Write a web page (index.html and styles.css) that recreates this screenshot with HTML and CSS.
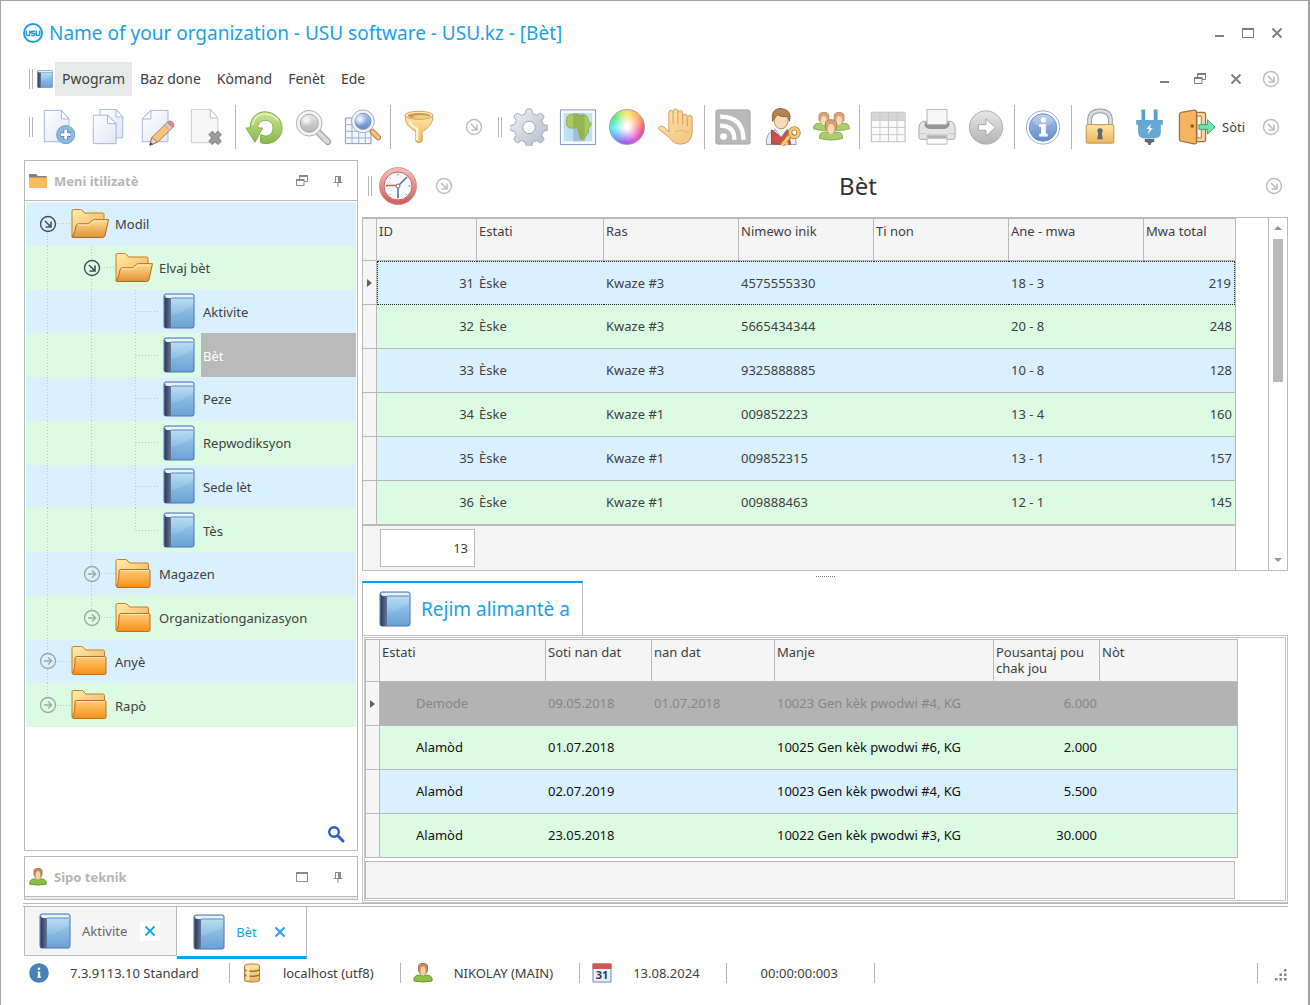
FILE: index.html
```html
<!DOCTYPE html>
<html lang="ht">

<head>
    <meta charset="utf-8" />
    <meta name="viewport" content="width=device-width, initial-scale=1.0" />

    <title>USU software - Bèt</title>

    <link rel="stylesheet" href="styles.css">
</head>

<body>
    <!-- all the icons, used below with <use> -->
    <svg class="sprite" aria-hidden="true">
        <defs>
            <linearGradient id="g-paper" x1="0" y1="0" x2="1" y2="1">
                <stop offset="0" stop-color="#ffffff" />
                <stop offset="1" stop-color="#dfe6f5" />
            </linearGradient>
            <linearGradient id="g-gray" x1="0" y1="0" x2="0" y2="1">
                <stop offset="0" stop-color="#e6e6e6" />
                <stop offset="1" stop-color="#b4b4b4" />
            </linearGradient>
            <linearGradient id="g-steel" x1="0" y1="0" x2="1" y2="1">
                <stop offset="0" stop-color="#eff2f6" />
                <stop offset="1" stop-color="#b3bac8" />
            </linearGradient>
            <linearGradient id="g-blue" x1="0" y1="0" x2="0" y2="1">
                <stop offset="0" stop-color="#a9c4ea" />
                <stop offset="1" stop-color="#6389cb" />
            </linearGradient>
            <linearGradient id="g-sky" x1="0" y1="0" x2="0" y2="1">
                <stop offset="0" stop-color="#c2e6f6" />
                <stop offset="1" stop-color="#6ba3d6" />
            </linearGradient>
            <linearGradient id="g-spine" x1="0" y1="0" x2="1" y2="0">
                <stop offset="0" stop-color="#2c3656" />
                <stop offset="1" stop-color="#64779c" />
            </linearGradient>
            <linearGradient id="g-green" x1="0" y1="0" x2="0" y2="1">
                <stop offset="0" stop-color="#cde394" />
                <stop offset="1" stop-color="#86b94c" />
            </linearGradient>
            <linearGradient id="g-gold" x1="0" y1="0" x2="0" y2="1">
                <stop offset="0" stop-color="#ffe6a6" />
                <stop offset="1" stop-color="#ecb65c" />
            </linearGradient>
            <linearGradient id="g-back" x1="0" y1="0" x2="1" y2="1">
                <stop offset="0" stop-color="#fff0a8" />
                <stop offset="1" stop-color="#f0a95a" />
            </linearGradient>
            <linearGradient id="g-orange" x1="0" y1="0" x2="0" y2="1">
                <stop offset="0" stop-color="#ffcd7c" />
                <stop offset="1" stop-color="#f69014" />
            </linearGradient>
            <linearGradient id="g-open" x1="0" y1="0" x2="0" y2="1">
                <stop offset="0" stop-color="#ffdb93" />
                <stop offset="1" stop-color="#e09334" />
            </linearGradient>
            <linearGradient id="g-skin" x1="0" y1="0" x2="1" y2="1">
                <stop offset="0" stop-color="#fde6ac" />
                <stop offset="1" stop-color="#f1c47c" />
            </linearGradient>
            <linearGradient id="g-red" x1="0" y1="0" x2="0" y2="1">
                <stop offset="0" stop-color="#f4bcb7" />
                <stop offset="1" stop-color="#cf605b" />
            </linearGradient>
            <radialGradient id="g-white">
                <stop offset="0" stop-color="#ffffff" />
                <stop offset="1" stop-color="#ffffff" stop-opacity="0" />
            </radialGradient>
        </defs>

        <symbol id="i-logo" viewBox="0 0 20 20">
            <circle cx="10" cy="10" r="9" fill="#fff" stroke="#1e9be6" stroke-width="2" />
            <path d="M3.400 7.500v3.400q0 1.700 1.700 1.700t1.700-1.700V7.500M11.800 8.300H9.500q-1.300 0-1.300 1t1.300 1h1q1.300 0 1.300 1.100t-1.300 1.100H8.100M13.300 7.500v3.400q0 1.700 1.700 1.700t1.700-1.700V7.500" fill="none" stroke="#1e9be6" stroke-width="1.500" />
        </symbol>

        <symbol id="i-book" viewBox="0 0 32 36">
            <rect x="1" y="1" width="30" height="34" rx="2" fill="url(#g-sky)" stroke="#4a70b8" />
            <path d="M3 2h26q1 0 1 1.500v1.500H5q-2 0-2-1z" fill="#e8f3fb" />
            <path d="M8 5h22" stroke="#5d88bd" />
            <path d="M1.500 3v31q0 1 1.500 1h5V5H5q-3 0-3-2z" fill="url(#g-spine)" />
            <path d="M8.500 22Q20 20 30 12v22H8.500z" fill="#5a9ad6" opacity=".2" />
        </symbol>

        <symbol id="i-folder-open" viewBox="0 0 40 32">
            <path d="M2 29V3q0-1.500 1.500-1.500h7q1.500 0 2.500 1.500l1.500 2h18q1.500 0 1.500 1.500V27H3z" fill="url(#g-back)" stroke="#c67c28" />
            <path d="M2.500 29.500q2.500-6 3.500-11.500.5-2 2.500-2.200h10l4-3.500q.8-.6 2-.6h14L35 27.500q-.5 2-2.500 2z" fill="url(#g-open)" stroke="#b4661e" />
            <path d="M7.500 17h11.500l4-3.500q.6-.5 1.500-.5h12" fill="none" stroke="#fff0c0" />
        </symbol>

        <symbol id="i-folder" viewBox="0 0 40 32">
            <path d="M2 28V3q0-1.500 1.500-1.500h8q1.500 0 2.500 1.500l1.500 2h17.500q1.500 0 1.500 1.500V28z" fill="url(#g-back)" stroke="#c67c28" />
            <path d="M2.500 28.500Q5 24 5 13.500q0-2 2-2h27.500q1.500 0 1.500 1.500v15q0 1.500-1.500 1.500H4q-1.500 0-1.500-1z" fill="url(#g-orange)" stroke="#c06a1c" />
            <path d="M6.500 12.500H35" stroke="#ffe8b8" />
        </symbol>

        <symbol id="i-diag" viewBox="0 0 18 18">
            <circle cx="9" cy="9" r="7.500" fill="var(--row)" stroke="currentColor" stroke-width="1.400" />
            <path d="M6 6l5.500 5.500M12 6.500V12H6.500" fill="none" stroke="currentColor" stroke-width="1.600" />
        </symbol>

        <symbol id="i-right" viewBox="0 0 18 18">
            <circle cx="9" cy="9" r="7.500" fill="var(--row)" stroke="currentColor" stroke-width="1.300" />
            <path d="M5 9h7.500M9 5.500L12.700 9 9 12.500" fill="none" stroke="currentColor" stroke-width="1.300" />
        </symbol>

        <symbol id="i-min" viewBox="0 0 16 16">
            <path d="M4 11h9" stroke="currentColor" stroke-width="2" />
        </symbol>
        <symbol id="i-max" viewBox="0 0 16 16">
            <path d="M2.500 4v8.500h11V4z" fill="none" stroke="currentColor" />
            <path d="M2 4h12" stroke="currentColor" stroke-width="2" />
        </symbol>
        <symbol id="i-restore" viewBox="0 0 16 16">
            <path d="M5.500 6V3.500h8v5H10M2.500 7.500h7.500v5H2.500z" fill="none" stroke="currentColor" />
            <path d="M5 3h9M2 7h8.500" stroke="currentColor" stroke-width="2" />
        </symbol>
        <symbol id="i-close" viewBox="0 0 16 16">
            <path d="M3.500 3.500l9 9M12.500 3.500l-9 9" stroke="currentColor" stroke-width="1.900" />
        </symbol>
        <symbol id="i-pin" viewBox="0 0 16 16">
            <path d="M5 3.500h6M5.500 3.500V9M3.500 9.500h9M8 9.500V14" fill="none" stroke="currentColor" />
            <path d="M8 3.500h3V9H8z" fill="currentColor" />
        </symbol>

        <symbol id="i-new" viewBox="0 0 40 40">
            <path d="M3.500 2.500h18l8 9v24h-26z" fill="url(#g-paper)" stroke="#a3b3dc" />
            <path d="M21.500 2.500v9h8z" fill="#fff" stroke="#a3b3dc" />
            <circle cx="26" cy="28" r="9.500" fill="#8bbbe2" stroke="#7399cc" />
            <path d="M26 22.500v11M20.500 28h11" stroke="#6189bd" stroke-width="5" />
            <path d="M26 23v10M21 28h10" stroke="#fff" stroke-width="3" />
        </symbol>
        <symbol id="i-copy" viewBox="0 0 40 40">
            <path d="M10.500 1.500h17l7 8v22h-24z" fill="url(#g-paper)" stroke="#a3b3dc" />
            <path d="M27.500 1.500v8h7z" fill="#fff" stroke="#a3b3dc" />
            <path d="M3.500 7.500h15l9 9v21h-24z" fill="url(#g-paper)" stroke="#a3b3dc" />
            <path d="M18.500 7.500v9h9z" fill="#fff" stroke="#a3b3dc" />
        </symbol>
        <symbol id="i-edit" viewBox="0 0 40 40">
            <path d="M12.500 2.500h18v33h-27v-24z" fill="url(#g-paper)" stroke="#a3b3dc" />
            <path d="M12.500 2.500v9h-9z" fill="#fff" stroke="#a3b3dc" />
            <path d="M11.500 39l2-8L30 15l5.500 5.500L19.500 36z" fill="#f6c27c" stroke="#a87a58" />
            <path d="M11.500 39l2-8 6 5z" fill="#e9d5c5" stroke="#8c7a76" />
            <path d="M11 39.500l1-3.500 3 2.200z" fill="#48424f" />
            <path d="M27 18l3-3 5.500 5.500-3 3z" fill="#c9cfd8" stroke="#9a8a88" stroke-width=".6" />
            <path d="M30 15q2.500-3 5.500 0t0 5.500z" fill="#e98d80" stroke="#b8706a" stroke-width=".7" />
        </symbol>
        <symbol id="i-delete" viewBox="0 0 40 40">
            <path d="M3.500 1.500h20l8 9v26h-28z" fill="#f7f7f7" stroke="#c8c8c8" />
            <path d="M23.500 1.500v9h8z" fill="#fff" stroke="#c0c0c0" />
            <path d="M23.500 26l10 11M33.500 26l-10 11" stroke="#828282" stroke-width="6" />
            <path d="M23.500 26l10 11M33.500 26l-10 11" stroke="#9c9c9c" stroke-width="4" />
        </symbol>
        <symbol id="i-refresh" viewBox="0 0 40 40">
            <path d="M5.500 21C5 11 12 4 21 4s18 7 18 17-8 16.500-17 16.500q-3 0-5.500-1v-8.500q2.500 1.500 5 1.500c5 0 8-4 8-8.500S26.500 13 21.500 13s-8.500 4-8 8h5L10.500 36 1 21z" fill="url(#g-green)" stroke="#7fab45" />
            <path d="M8 18Q10 6 22 6.500q9 .5 13 7" fill="none" stroke="#e6f2c4" stroke-width="1.500" />
        </symbol>
        <symbol id="i-find" viewBox="0 0 40 40">
            <path d="M26 26l9.500 9.500" stroke="#a2a2a2" stroke-width="7" stroke-linecap="round" />
            <path d="M26 26l9.500 9.500" stroke="#dcdcdc" stroke-width="4.500" stroke-linecap="round" />
            <circle cx="16" cy="16" r="13.500" fill="#f4f4f4" stroke="#ababab" />
            <circle cx="16" cy="16" r="9.500" fill="url(#g-gray)" stroke="#a0a0a0" />
            <circle cx="13" cy="13" r="6" fill="url(#g-white)" />
        </symbol>
        <symbol id="i-find-table" viewBox="0 0 40 40">
            <path d="M2.500 10.500h27v27h-27z" fill="#f3f6fd" stroke="#7e92c8" />
            <path d="M2.500 17.500h27M2.500 24.500h27M2.500 31.500h27M9.500 10.500v27M16.500 10.500v27M23.500 10.500v27" stroke="#9aa9d2" />
            <path d="M31 25l6 6" stroke="#b07c48" stroke-width="6" stroke-linecap="round" />
            <path d="M31 25l6 6" stroke="#f5c07a" stroke-width="4" stroke-linecap="round" />
            <circle cx="21" cy="14" r="12" fill="#f2f5f9" stroke="#9ba7b9" />
            <circle cx="21" cy="14" r="8.500" fill="url(#g-blue)" stroke="#7d92bb" />
            <circle cx="18" cy="12" r="7" fill="url(#g-white)" />
        </symbol>
        <symbol id="i-funnel" viewBox="0 0 40 40">
            <path d="M4.500 7Q4 19 16.500 25v11q3.500 3 7 0V25Q36 19 35.500 7z" fill="url(#g-gold)" stroke="#cf9a54" />
            <path d="M9 13q2 6 9 9v13" fill="none" stroke="#fff2cf" stroke-width="2.500" />
            <ellipse cx="20" cy="7" rx="15.500" ry="4.500" fill="#ffe9b8" stroke="#cf9a54" />
            <ellipse cx="20" cy="7.500" rx="12.500" ry="3" fill="#cf9650" />
            <ellipse cx="22" cy="8.500" rx="9" ry="1.800" fill="#f4cd85" />
        </symbol>
        <symbol id="i-gear" viewBox="0 0 40 40">
            <path d="M17 2.500q0-1.500 1.500-1.500h3q1.500 0 1.500 1.500l.8 3.500 4.200 1.800 3-2q1.200-.8 2.200.2l2 2q1 1 .2 2.200l-2 3 1.800 4.300 3.500.7q1.500.3 1.500 1.600v2.400q0 1.300-1.500 1.600l-3.500.7-1.800 4.300 2 3q.8 1.200-.2 2.200l-2 2q-1 1-2.200.2l-3-2-4.200 1.800-.8 3.500q-.3 1.500-1.500 1.500h-3q-1.200 0-1.500-1.500l-.8-3.500-4.200-1.800-3 2q-1.200.8-2.200-.2l-2-2q-1-1-.2-2.200l2-3-1.800-4.300-3.500-.7q-1.500-.3-1.500-1.600v-2.400q0-1.300 1.500-1.600l3.500-.7 1.800-4.300-2-3q-.8-1.200.2-2.200l2-2q1-1 2.200-.2l3 2L16.200 6z" fill="url(#g-steel)" stroke="#9aa3b6" />
            <circle cx="20" cy="20.500" r="6.500" fill="#fff" stroke="#9aa3b6" />
        </symbol>
        <symbol id="i-map" viewBox="0 0 40 40">
            <path d="M1.500 2h37v36.500h-37z" fill="#f7fafd" stroke="#7d94c4" />
            <path d="M5 5.500h30v29.500H5z" fill="#bddff2" />
            <path d="M15 5.500h12V35H15z" fill="#9cc0d9" />
            <path d="M8 12q1-5.500 6-5.500h5q2 2 4.500 1.500l5-.5q2 3 3 7.500l2.500 1q0 3-3 5.500 1 5-2 6.500-1 4.500-4.500 5-2.500 0-3-5-1.500-3-1-6-2-1.500-5-1-6 1.500-7.500-4z" fill="#a9ca60" stroke="#8eae4c" />
            <path d="M15 6.500h4q2 2 4.500 1.500l3.500-.3v24.300q-3.500 2.500-5-1-.5-2-.5-4-1.500-3-1-6-2-1.500-5.500-.8z" fill="#80a243" opacity=".5" />
        </symbol>
        <symbol id="i-hand" viewBox="0 0 40 40">
            <path d="M12.500 22V5q0-2.500 2.200-2.500T17 5V3.500Q17 1 19.500 1T22 3.500V5q0-2.500 2.500-2.500T27 5v4q0-2.500 2.500-2.500T32 9l.5 0q2-3 4.500 0v17q-1 12-12 12-8 0-12-7L2 22.500Q1 19.500 3.500 19t5 2l4 4z" fill="url(#g-skin)" stroke="#d19c60" />
            <path d="M17 5v12M22 4v13M27 6v11M32 10v9" stroke="#d19c60" />
            <path d="M19 25q7-3 14 1" fill="none" stroke="#e6b26a" />
        </symbol>
        <symbol id="i-rss" viewBox="0 0 40 40">
            <rect x="2" y="2" width="36" height="36" rx="2" fill="#b9b9b9" stroke="#a4a4a4" />
            <circle cx="10" cy="30" r="3.500" fill="#fff" />
            <path d="M6.500 18.500q15 0 15 15M6.500 9q24.500 0 24.500 24.500" fill="none" stroke="#fff" stroke-width="4.500" />
        </symbol>
        <symbol id="i-user-key" viewBox="0 0 40 40">
            <path d="M3.500 38.500q-1-12 8-15L18 22l9 2q8 3 8 14.500z" fill="#e9ecf2" stroke="#8d96a8" />
            <path d="M9 38V23l9 7 8-7 3 15z" fill="#ca504c" stroke="#9e4244" />
            <path d="M12 21.500l7 9 7-9" fill="#fff" stroke="#9aa4b8" />
            <ellipse cx="19" cy="12.500" rx="7.500" ry="9.500" fill="#f8dcb8" stroke="#b78453" />
            <path d="M10 14Q8 1 18 .5 31 1 28 14l-2-5q-7 1-11-2-2 3-5 7z" fill="#b58452" stroke="#8d6236" />
            <path d="M20 39l10-12" stroke="#b0843e" stroke-width="5" />
            <path d="M20 39l10-12M23 36l3 2.500" stroke="#f5ca72" stroke-width="3" />
            <circle cx="33" cy="26" r="4.500" fill="none" stroke="#b0843e" stroke-width="4.500" />
            <circle cx="33" cy="26" r="4.500" fill="none" stroke="#f5ca72" stroke-width="2.800" />
        </symbol>
        <symbol id="i-person" viewBox="0 0 20 20">
            <path d="M1 18q-1-5 4.500-6l4.500 1 4.500-1q5.500 1 4.500 6-9 2-18 0z" fill="#8cc047" stroke="#5f9a32" />
            <path d="M5.500 5Q5 0 10 .5 15 0 14.500 5v3l-2 3h-5l-2-3z" fill="#c98a58" stroke="#a0643a" stroke-width=".8" />
            <ellipse cx="10" cy="8" rx="3" ry="5" fill="#f8d3a8" stroke="#c08556" stroke-width=".6" />
        </symbol>
        <symbol id="i-friend" viewBox="0 0 20 20">
            <path d="M.5 16q0-5 4.500-5l5 1 5-1q4.500 0 4.500 5-9.500 3-19 0z" fill="#a9cf6c" stroke="#7fae48" stroke-width=".8" />
            <path d="M5.500 5Q5 1 10 1t4.500 4v3l-2 3h-5l-2-3z" fill="#d9a27a" stroke="#b8794c" stroke-width=".7" />
            <ellipse cx="10" cy="8.500" rx="3" ry="4.500" fill="#fadcb8" stroke="#cf9a70" stroke-width=".5" />
        </symbol>
        <symbol id="i-group" viewBox="0 0 40 40">
            <use href="#i-friend" x="1" y="2" width="23" height="26" />
            <use href="#i-friend" x="17" y="2" width="23" height="26" />
            <use href="#i-friend" x="7" y="8" width="26" height="32" />
        </symbol>
        <symbol id="i-table" viewBox="0 0 40 40">
            <path d="M2.500 4.500h35.500v31H2.500z" fill="#fafafa" stroke="#b6b6b6" />
            <path d="M3 5h34.500v8H3z" fill="#d6d6d6" />
            <path d="M2.500 13h35.500M2.500 20.500h35.500M2.500 28h35.500M11.500 4.500v31M20.500 4.500v31M29.500 4.500v31" stroke="#c6c6c6" />
        </symbol>
        <symbol id="i-print" viewBox="0 0 40 40">
            <path d="M5 14h30q4 2 4 6v11q0 2-2 2H3q-2 0-2-2V20q0-4 4-6z" fill="#e4e4e4" stroke="#a6a6a6" />
            <path d="M7 15h26v4q-2 3-5 3H12q-3 0-5-3z" fill="#949494" />
            <path d="M9.500 1.500h21v16h-21z" fill="#f7f7f7" stroke="#b4b4b4" />
            <path d="M9.500 28.500h21V38h-21z" fill="#fff" stroke="#b4b4b4" />
            <path d="M2 27h6M32 27h6M10 29h20v3H10z" fill="#b4b4b4" stroke="#c2c2c2" />
        </symbol>
        <symbol id="i-go" viewBox="0 0 40 40">
            <circle cx="20" cy="20.500" r="17.500" fill="url(#g-gray)" stroke="#ababab" />
            <path d="M12 17.500h8v-6l10 9-10 9v-6h-8z" fill="#fff" stroke="#a3a3a3" />
        </symbol>
        <symbol id="i-info" viewBox="0 0 40 40">
            <circle cx="20" cy="20.500" r="17.500" fill="#fff" stroke="#8fa3cf" />
            <circle cx="20" cy="20.500" r="14.500" fill="url(#g-blue)" stroke="#7590c8" />
            <ellipse cx="20" cy="13" rx="11" ry="6" fill="#fff" opacity=".2" />
            <circle cx="20.500" cy="12.500" r="2.800" fill="#fff" />
            <path d="M16 17h7v10h2v3h-9v-3h2v-7h-2z" fill="#fff" />
        </symbol>
        <symbol id="i-lock" viewBox="0 0 40 40">
            <path d="M9 19v-6q0-10 11-10t11 10v6" fill="none" stroke="#9299a5" stroke-width="5" />
            <path d="M9 19v-6q0-10 11-10t11 10v6" fill="none" stroke="#d9dce2" stroke-width="3" />
            <rect x="5.500" y="17.500" width="29" height="19.500" rx="1" fill="url(#g-gold)" stroke="#c09045" />
            <circle cx="20" cy="24" r="2.800" fill="#62666d" />
            <path d="M18.500 25h3l1.500 8h-6z" fill="#62666d" />
        </symbol>
        <symbol id="i-plug" viewBox="0 0 40 40">
            <path d="M14 1.500v12M27 1.500v12" stroke="#5c9fce" stroke-width="4" />
            <path d="M6.500 12.500h28v5h-2v8q0 6-7 6.500h-10q-7-.5-7-6.500v-8h-2z" fill="#66a7d4" />
            <path d="M22 16.500l-4.500 5.500h3l-2 6 5.500-7h-3z" fill="#fff" />
            <path d="M15.500 32.500h10v3l-3 1-1 2.500h-2l-1-2.500-3-1z" fill="#5d6875" />
        </symbol>
        <symbol id="i-exit" viewBox="0 0 40 40">
            <path d="M18 4.500h9q2 0 2 2v27q0 2-2 2h-9z" fill="#f9d59c" stroke="#a36d38" stroke-width="1.300" />
            <path d="M20 8.500h4.500v23H20z" fill="#fff" stroke="#a36d38" />
            <path d="M1.500 7q0-2 2-2.300l13.500-2.500q2.500-.3 2.500 2v31.500q0 2.500-2.500 2L3.500 35q-2-.3-2-2z" fill="#f6b562" stroke="#a36d38" stroke-width="1.300" />
            <circle cx="15" cy="19" r="1.800" fill="#7b532c" />
            <path d="M22 17.500h9v-5l8 7.500-8 7.500v-5h-9z" fill="#66e8ab" stroke="#4a9870" />
        </symbol>
        <symbol id="i-clock" viewBox="0 0 40 40">
            <circle cx="20" cy="20" r="16.500" fill="#f5f8fd" stroke="url(#g-red)" stroke-width="4.500" />
            <circle cx="20" cy="20" r="14" fill="none" stroke="#b46262" />
            <circle cx="20" cy="20" r="18.500" fill="none" stroke="#d08a86" stroke-width=".7" />
            <path d="M20 7.500v2M20 30.500v2M7.500 20h2M30.500 20h2M11.500 11.500l1 1M28 28l1 1M11.500 29l1-1" stroke="#7a87a2" />
            <path d="M8 19.500h12" stroke="#d05b54" stroke-width="1.500" />
            <path d="M20 20l9-9M20 18v14" stroke="#66738c" stroke-width="1.600" />
            <circle cx="20" cy="20" r="2" fill="#fff" stroke="#66738c" />
        </symbol>
        <symbol id="i-search" viewBox="0 0 18 18">
            <circle cx="7" cy="7" r="4.800" fill="none" stroke="#2a62c0" stroke-width="2.400" />
            <path d="M10.500 10.500l5.500 5.500" stroke="#2a62c0" stroke-width="3" stroke-linecap="round" />
        </symbol>
        <symbol id="i-folder-flat" viewBox="0 0 18 14">
            <path d="M0 4V1q0-1 1-1h6l2 2h8q1 0 1 1v2H0z" fill="#7f8387" />
            <path d="M0 3.500h18V14H0z" fill="#fdbb58" />
        </symbol>
        <symbol id="i-about" viewBox="0 0 20 20">
            <circle cx="10" cy="10" r="9.800" fill="#4681b9" />
            <circle cx="10" cy="5.800" r="1.300" fill="#fff" />
            <path d="M8.500 8.500h2.700v5h.8v1.200H8.300v-1.200h.7V9.700h-.5z" fill="#fff" />
        </symbol>
        <symbol id="i-database" viewBox="0 0 20 20">
            <path d="M2.500 3q0-2 7.500-2t7.500 2v14q0 2-7.500 2t-7.500-2z" fill="url(#g-gold)" stroke="#b07a3c" />
            <path d="M2.500 7q7.500 2.500 15 0M2.500 12q7.500 2.500 15 0" fill="none" stroke="#a66a30" stroke-width="1.500" />
            <path d="M6 4v13" stroke="#fff3cf" stroke-width="3" opacity=".8" />
        </symbol>
        <symbol id="i-size-grip" viewBox="0 0 16 16">
            <path d="M12 2h2.500v2.500H12zM7.500 6.500H10V9H7.500zM12 6.500h2.500V9H12zM3 11h2.500v2.500H3zM7.500 11H10v2.500H7.500zM12 11h2.500v2.500H12z" fill="#868686" />
        </symbol>
    </svg>

    <div class="window">
        <header class="title-bar">
            <svg class="logo"><use href="#i-logo" /></svg>
            <h1>Name of your organization - USU software - USU.kz - [Bèt]</h1>
            <button class="window-button" aria-label="Minimize"><svg><use href="#i-min" /></svg></button>
            <button class="window-button" aria-label="Maximize"><svg><use href="#i-max" /></svg></button>
            <button class="window-button" aria-label="Close"><svg><use href="#i-close" /></svg></button>
        </header>

        <nav class="menu-bar">
            <span class="grip"></span>
            <svg class="menu-icon"><use href="#i-book" /></svg>
            <button class="menu-item active">Pwogram</button>
            <button class="menu-item">Baz done</button>
            <button class="menu-item">Kòmand</button>
            <button class="menu-item">Fenèt</button>
            <button class="menu-item">Ede</button>
            <div class="child-buttons">
                <button class="window-button" aria-label="Minimize child"><svg><use href="#i-min" /></svg></button>
                <button class="window-button" aria-label="Restore child"><svg><use href="#i-restore" /></svg></button>
                <button class="window-button" aria-label="Close child"><svg><use href="#i-close" /></svg></button>
                <button class="more last" aria-label="More"><svg><use href="#i-diag" /></svg></button>
            </div>
        </nav>

        <div class="toolbar">
            <span class="grip"></span>
            <button class="tool" aria-label="New"><svg><use href="#i-new" /></svg></button>
            <button class="tool" aria-label="Copy"><svg><use href="#i-copy" /></svg></button>
            <button class="tool" aria-label="Edit"><svg><use href="#i-edit" /></svg></button>
            <button class="tool" aria-label="Delete"><svg><use href="#i-delete" /></svg></button>
            <span class="separator"></span>
            <button class="tool" aria-label="Refresh"><svg><use href="#i-refresh" /></svg></button>
            <button class="tool" aria-label="Find"><svg><use href="#i-find" /></svg></button>
            <button class="tool" aria-label="Find in table"><svg><use href="#i-find-table" /></svg></button>
            <span class="separator"></span>
            <button class="tool" aria-label="Filter"><svg class="small"><use href="#i-funnel" /></svg></button>
            <button class="more toolbar-more" aria-label="More"><svg><use href="#i-diag" /></svg></button>
            <span class="grip"></span>
            <button class="tool" aria-label="Settings"><svg><use href="#i-gear" /></svg></button>
            <button class="tool" aria-label="Map"><svg><use href="#i-map" /></svg></button>
            <button class="tool" aria-label="Colors"><span class="color-wheel"></span></button>
            <button class="tool" aria-label="Stop"><svg><use href="#i-hand" /></svg></button>
            <span class="separator"></span>
            <button class="tool" aria-label="News"><svg><use href="#i-rss" /></svg></button>
            <button class="tool" aria-label="Permissions"><svg><use href="#i-user-key" /></svg></button>
            <button class="tool" aria-label="Users"><svg><use href="#i-group" /></svg></button>
            <span class="separator"></span>
            <button class="tool" aria-label="Table"><svg><use href="#i-table" /></svg></button>
            <button class="tool" aria-label="Print"><svg><use href="#i-print" /></svg></button>
            <button class="tool" aria-label="Go"><svg><use href="#i-go" /></svg></button>
            <span class="separator"></span>
            <button class="tool" aria-label="Info"><svg><use href="#i-info" /></svg></button>
            <span class="separator"></span>
            <button class="tool" aria-label="Lock"><svg><use href="#i-lock" /></svg></button>
            <button class="tool" aria-label="Connection"><svg><use href="#i-plug" /></svg></button>
            <button class="tool exit"><svg><use href="#i-exit" /></svg>Sòti</button>
            <button class="more last" aria-label="More"><svg><use href="#i-diag" /></svg></button>
        </div>

        <div class="workspace">
            <aside class="sidebar">
                <section class="panel panel-menu">
                    <div class="panel-header">
                        <svg class="panel-icon flat"><use href="#i-folder-flat" /></svg>
                        <h2>Meni itilizatè</h2>
                        <button class="panel-button" aria-label="Restore panel"><svg><use href="#i-restore" /></svg></button>
                        <button class="panel-button" aria-label="Pin panel"><svg><use href="#i-pin" /></svg></button>
                    </div>
                    <ul class="tree">
                        <li class="tree-row">
                            <span class="guide first dash"><button class="toggle open" aria-label="Collapse"><svg><use href="#i-diag" /></svg></button></span>
                            <svg class="folder"><use href="#i-folder-open" /></svg>
                            <a href="#modil">Modil</a>
                        </li>
                        <li class="tree-row">
                            <span class="guide"></span>
                            <span class="guide dash"><button class="toggle open" aria-label="Collapse"><svg><use href="#i-diag" /></svg></button></span>
                            <svg class="folder"><use href="#i-folder-open" /></svg>
                            <a href="#elvaj">Elvaj bèt</a>
                        </li>
                        <li class="tree-row">
                            <span class="guide"></span>
                            <span class="guide"></span>
                            <span class="guide dash"></span>
                            <svg class="book"><use href="#i-book" /></svg>
                            <a href="#aktivite">Aktivite</a>
                        </li>
                        <li class="tree-row selected">
                            <span class="guide"></span>
                            <span class="guide"></span>
                            <span class="guide dash"></span>
                            <svg class="book"><use href="#i-book" /></svg>
                            <a href="#bet">Bèt</a>
                        </li>
                        <li class="tree-row">
                            <span class="guide"></span>
                            <span class="guide"></span>
                            <span class="guide dash"></span>
                            <svg class="book"><use href="#i-book" /></svg>
                            <a href="#peze">Peze</a>
                        </li>
                        <li class="tree-row">
                            <span class="guide"></span>
                            <span class="guide"></span>
                            <span class="guide dash"></span>
                            <svg class="book"><use href="#i-book" /></svg>
                            <a href="#repwodiksyon">Repwodiksyon</a>
                        </li>
                        <li class="tree-row">
                            <span class="guide"></span>
                            <span class="guide"></span>
                            <span class="guide dash"></span>
                            <svg class="book"><use href="#i-book" /></svg>
                            <a href="#sede">Sede lèt</a>
                        </li>
                        <li class="tree-row">
                            <span class="guide"></span>
                            <span class="guide"></span>
                            <span class="guide end dash"></span>
                            <svg class="book"><use href="#i-book" /></svg>
                            <a href="#tes">Tès</a>
                        </li>
                        <li class="tree-row">
                            <span class="guide"></span>
                            <span class="guide dash"><button class="toggle" aria-label="Expand"><svg><use href="#i-right" /></svg></button></span>
                            <svg class="folder"><use href="#i-folder" /></svg>
                            <a href="#magazen">Magazen</a>
                        </li>
                        <li class="tree-row">
                            <span class="guide"></span>
                            <span class="guide end dash"><button class="toggle" aria-label="Expand"><svg><use href="#i-right" /></svg></button></span>
                            <svg class="folder"><use href="#i-folder" /></svg>
                            <a href="#organizasyon">Organizationganizasyon</a>
                        </li>
                        <li class="tree-row">
                            <span class="guide dash"><button class="toggle" aria-label="Expand"><svg><use href="#i-right" /></svg></button></span>
                            <svg class="folder"><use href="#i-folder" /></svg>
                            <a href="#anye">Anyè</a>
                        </li>
                        <li class="tree-row">
                            <span class="guide end dash"><button class="toggle" aria-label="Expand"><svg><use href="#i-right" /></svg></button></span>
                            <svg class="folder"><use href="#i-folder" /></svg>
                            <a href="#rapo">Rapò</a>
                        </li>
                    </ul>
                    <button class="tree-search" aria-label="Search"><svg><use href="#i-search" /></svg></button>
                </section>

                <section class="panel panel-support">
                    <div class="panel-header">
                        <svg class="panel-icon"><use href="#i-person" /></svg>
                        <h2>Sipo teknik</h2>
                        <button class="panel-button" aria-label="Maximize panel"><svg><use href="#i-max" /></svg></button>
                        <button class="panel-button" aria-label="Pin panel"><svg><use href="#i-pin" /></svg></button>
                    </div>
                </section>
            </aside>

            <main class="content">
                <div class="content-header">
                    <span class="grip"></span>
                    <button class="clock" aria-label="Timer"><svg><use href="#i-clock" /></svg></button>
                    <button class="more" aria-label="More"><svg><use href="#i-diag" /></svg></button>
                    <h2>Bèt</h2>
                    <button class="more" aria-label="More"><svg><use href="#i-diag" /></svg></button>
                </div>

                <div class="grid-frame">
                    <div class="grid-area">
                        <table class="grid animals">
                            <colgroup>
                                <col class="w-mark">
                                <col class="w-id">
                                <col class="w-state">
                                <col class="w-wide">
                                <col class="w-wide">
                                <col class="w-wide">
                                <col class="w-wide">
                                <col class="w-total">
                            </colgroup>
                            <thead>
                                <tr>
                                    <th></th>
                                    <th>ID</th>
                                    <th>Estati</th>
                                    <th>Ras</th>
                                    <th>Nimewo inik</th>
                                    <th>Ti non</th>
                                    <th>Ane - mwa</th>
                                    <th>Mwa total</th>
                                </tr>
                            </thead>
                            <tbody>
                                <tr class="focused">
                                    <td class="mark"><span class="pointer"></span></td>
                                    <td class="number">31</td>
                                    <td>Èske</td>
                                    <td>Kwaze #3</td>
                                    <td>4575555330</td>
                                    <td></td>
                                    <td>18 - 3</td>
                                    <td class="number">219</td>
                                </tr>
                                <tr>
                                    <td class="mark"></td>
                                    <td class="number">32</td>
                                    <td>Èske</td>
                                    <td>Kwaze #3</td>
                                    <td>5665434344</td>
                                    <td></td>
                                    <td>20 - 8</td>
                                    <td class="number">248</td>
                                </tr>
                                <tr>
                                    <td class="mark"></td>
                                    <td class="number">33</td>
                                    <td>Èske</td>
                                    <td>Kwaze #3</td>
                                    <td>9325888885</td>
                                    <td></td>
                                    <td>10 - 8</td>
                                    <td class="number">128</td>
                                </tr>
                                <tr>
                                    <td class="mark"></td>
                                    <td class="number">34</td>
                                    <td>Èske</td>
                                    <td>Kwaze #1</td>
                                    <td>009852223</td>
                                    <td></td>
                                    <td>13 - 4</td>
                                    <td class="number">160</td>
                                </tr>
                                <tr>
                                    <td class="mark"></td>
                                    <td class="number">35</td>
                                    <td>Èske</td>
                                    <td>Kwaze #1</td>
                                    <td>009852315</td>
                                    <td></td>
                                    <td>13 - 1</td>
                                    <td class="number">157</td>
                                </tr>
                                <tr>
                                    <td class="mark"></td>
                                    <td class="number">36</td>
                                    <td>Èske</td>
                                    <td>Kwaze #1</td>
                                    <td>009888463</td>
                                    <td></td>
                                    <td>12 - 1</td>
                                    <td class="number">145</td>
                                </tr>
                            </tbody>
                            <tfoot>
                                <tr>
                                    <td></td>
                                    <td><output class="count">13</output></td>
                                    <td colspan="6"></td>
                                </tr>
                            </tfoot>
                        </table>
                    </div>
                    <div class="scrollbar">
                        <span class="arrow-up"></span>
                        <span class="thumb"></span>
                        <span class="arrow-down"></span>
                    </div>
                </div>

                <div class="splitter"></div>

                <div class="detail-tabs" role="tablist">
                    <button class="detail-tab" role="tab" aria-selected="true">
                        <svg class="book"><use href="#i-book" /></svg>Rejim alimantè a
                    </button>
                </div>

                <div class="detail-frame">
                    <table class="grid diet">
                        <colgroup>
                            <col class="w-mark">
                            <col class="w-diet-state">
                            <col class="w-date">
                            <col class="w-date-end">
                            <col class="w-food">
                            <col class="w-date">
                            <col class="w-note">
                        </colgroup>
                        <thead>
                            <tr>
                                <th></th>
                                <th>Estati</th>
                                <th>Soti nan dat</th>
                                <th>nan dat</th>
                                <th>Manje</th>
                                <th>Pousantaj pou chak jou</th>
                                <th>Nòt</th>
                            </tr>
                        </thead>
                        <tbody>
                            <tr class="outdated">
                                <td class="mark"><span class="pointer"></span></td>
                                <td class="state">Demode</td>
                                <td>09.05.2018</td>
                                <td>01.07.2018</td>
                                <td>10023 Gen kèk pwodwi #4, KG</td>
                                <td class="number">6.000</td>
                                <td></td>
                            </tr>
                            <tr>
                                <td class="mark"></td>
                                <td class="state">Alamòd</td>
                                <td>01.07.2018</td>
                                <td></td>
                                <td>10025 Gen kèk pwodwi #6, KG</td>
                                <td class="number">2.000</td>
                                <td></td>
                            </tr>
                            <tr>
                                <td class="mark"></td>
                                <td class="state">Alamòd</td>
                                <td>02.07.2019</td>
                                <td></td>
                                <td>10023 Gen kèk pwodwi #4, KG</td>
                                <td class="number">5.500</td>
                                <td></td>
                            </tr>
                            <tr>
                                <td class="mark"></td>
                                <td class="state">Alamòd</td>
                                <td>23.05.2018</td>
                                <td></td>
                                <td>10022 Gen kèk pwodwi #3, KG</td>
                                <td class="number">30.000</td>
                                <td></td>
                            </tr>
                        </tbody>
                    </table>
                    <div class="diet-footer"></div>
                </div>
            </main>
        </div>

        <div class="document-tabs" role="tablist">
            <div class="document-tab">
                <button class="document-name" role="tab" aria-selected="false"><svg class="book"><use href="#i-book" /></svg>Aktivite</button>
                <button class="document-close" aria-label="Close Aktivite"><svg><use href="#i-close" /></svg></button>
            </div>
            <div class="document-tab current">
                <button class="document-name" role="tab" aria-selected="true"><svg class="book"><use href="#i-book" /></svg>Bèt</button>
                <button class="document-close" aria-label="Close Bèt"><svg><use href="#i-close" /></svg></button>
            </div>
        </div>

        <footer class="status-bar">
            <span class="status-item"><svg><use href="#i-about" /></svg>7.3.9113.10 Standard</span>
            <span class="status-item"><svg><use href="#i-database" /></svg>localhost (utf8)</span>
            <span class="status-item"><svg><use href="#i-person" /></svg>NIKOLAY (MAIN)</span>
            <span class="status-item">
                <svg viewBox="0 0 20 20">
                    <path d="M1 1h18v18H1z" fill="#eaf1fb" stroke="#7187b5" />
                    <path d="M.5.5h19V6H.5z" fill="#d4574e" />
                    <text x="10" y="16" text-anchor="middle" class="calendar-day">31</text>
                </svg>13.08.2024
            </span>
            <span class="status-item timer">00:00:00:003</span>
            <span class="size-grip"><svg><use href="#i-size-grip" /></svg></span>
        </footer>
    </div>
</body>

</html>
```

FILE: styles.css
```css
* {
    box-sizing: border-box;
}

body {
    --line: #b9b9b9;
    --blue: #d9f0ff;
    --green: #dcfbe3;
    --accent: #1ba1e8;
    --row: #fff;
    margin: 0;
    font-family: "Noto Sans", "Open Sans", sans-serif;
    font-size: 13px;
    line-height: 16px;
    color: #404040;
    background: #fff;
}

h1,
h2 {
    margin: 0;
    font-weight: normal;
}

button {
    padding: 0;
    border: 0;
    background: none;
    font: inherit;
    color: inherit;
}

button svg {
    display: block;
}

a {
    color: inherit;
    text-decoration: none;
}

.sprite {
    position: absolute;
    width: 0;
    height: 0;
}

.window {
    display: flex;
    flex-direction: column;
    min-height: 100vh;
    padding: 0 20px 18px 22px;
    border: 2px solid #a3a3a3;
    border-top-width: 1px;
    border-left-width: 1px;
}

/* title and menu */

.title-bar {
    display: flex;
    align-items: center;
    height: 60px;
    padding-top: 4px;
}

.title-bar h1 {
    flex: 1;
    font-size: 19px;
    line-height: 24px;
    color: var(--accent);
}

.logo {
    width: 20px;
    height: 20px;
    margin-right: 6px;
}

.window-button {
    display: flex;
    justify-content: center;
    width: 29px;
    color: #7d7d7d;
}

.window-button svg,
.panel-button svg {
    width: 16px;
    height: 16px;
}

.title-bar .window-button:last-child {
    margin-right: -3px;
}

.menu-bar {
    display: flex;
    align-items: center;
    height: 36px;
}

.grip {
    flex: none;
    width: 4px;
    height: 20px;
    margin: 0 2px 0 6px;
    border: 1px solid #b5b5b5;
    border-width: 0 1px;
}

.menu-icon {
    width: 16px;
    height: 18px;
    margin: 0 2px;
}

.menu-item {
    height: 34px;
    padding: 0 8px;
    font-size: 14px;
}

.menu-item.active {
    padding: 0 7px;
    background: #e7e9e9;
}

.child-buttons {
    display: flex;
    align-items: center;
    margin-left: auto;
}

.child-buttons .window-button {
    width: 36px;
}

.more {
    display: flex;
    justify-content: center;
    width: 36px;
    color: #bdbdbd;
}

.more.last {
    width: 34px;
    margin-left: auto;
}

.more svg {
    width: 18px;
    height: 18px;
}

/* toolbar */

.toolbar {
    display: flex;
    align-items: center;
    height: 63px;
    padding-bottom: 3px;
}

.tool {
    display: flex;
    flex: none;
    align-items: center;
    justify-content: center;
    width: 49px;
    height: 44px;
}

.tool svg {
    flex: none;
    width: 38px;
    height: 38px;
}

.tool svg.small {
    width: 36px;
    height: 36px;
}

.tool.exit {
    justify-content: flex-start;
    gap: 6px;
    width: auto;
    padding-left: 5px;
}

.separator {
    width: 8px;
    height: 44px;
    background: linear-gradient(#b5b5b5, #b5b5b5) center / 1px 100% no-repeat;
}

.toolbar-more {
    margin-left: 13px;
}

.color-wheel {
    width: 36px;
    height: 36px;
    border-radius: 50%;
    border: 1px solid #a995bd;
    background: radial-gradient(#fff 8%, rgba(255, 255, 255, 0) 65%), conic-gradient(#fbe45a, #ff9a5c 60deg, #f4517e 100deg, #d553d8 150deg, #9a5cf0 190deg, #5bb4f5 235deg, #52eef0 265deg, #50e88a 305deg, #b8ec62 335deg, #fbe45a);
}

/* left side */

.workspace {
    display: grid;
    flex: 1;
    grid-template-columns: 334px minmax(0, 1fr);
    gap: 4px;
    padding-left: 1px;
}

.sidebar {
    display: flex;
    flex-direction: column;
    gap: 5px;
    padding-bottom: 3px;
}

.panel {
    border: 1px solid var(--line);
}

.panel-menu {
    display: flex;
    flex: 1;
    flex-direction: column;
}

.panel-support {
    padding-bottom: 2px;
    background: #ececec;
}

.panel-header {
    display: flex;
    align-items: center;
    height: 40px;
    padding: 0 1px 0 4px;
    border-bottom: 1px solid var(--line);
    background: #fff;
}

.panel-header h2 {
    flex: 1;
    font-size: 13px;
    font-weight: bold;
    color: #b5b5b5;
}

.panel-icon {
    width: 18px;
    height: 20px;
    margin-right: 7px;
}

.panel-icon.flat {
    height: 14px;
}

.panel-button {
    display: flex;
    justify-content: center;
    width: 36px;
    color: #8a8a8a;
}

.tree {
    display: grid;
    grid-auto-rows: 1fr;
    min-height: 526px;
    margin: 0;
    padding: 1px 1px 0;
    list-style: none;
}

.tree-row {
    --row: var(--blue);
    display: flex;
    align-items: center;
    min-height: 40px;
    background: var(--row);
}

.tree-row:nth-child(even) {
    --row: var(--green);
}

.tree-row a {
    display: flex;
    flex: 1;
    align-items: center;
    align-self: stretch;
    padding-top: 1px;
}

.tree-row .book {
    margin: 0 6px 0 5px;
}

.tree-row .book + a {
    padding-left: 2px;
}

.tree-row.selected a {
    background: #b9b9b9;
    color: #fff;
}

.guide {
    --dots: #bcc4c8 0 1px, transparent 1px 3px;
    display: flex;
    align-items: center;
    align-self: stretch;
    justify-content: center;
    width: 44px;
    background: repeating-linear-gradient(to bottom, var(--dots)) 21px 0 / 1px 100% no-repeat;
}

.guide.dash {
    background: repeating-linear-gradient(to bottom, var(--dots)) 21px 0 / 1px 100% no-repeat, repeating-linear-gradient(to right, var(--dots)) 22px 50% / 22px 1px no-repeat;
}

.guide.first.dash {
    background: repeating-linear-gradient(to bottom, var(--dots)) 21px 100% / 1px 50% no-repeat, repeating-linear-gradient(to right, var(--dots)) 22px 50% / 22px 1px no-repeat;
}

.guide.end.dash {
    background: repeating-linear-gradient(to bottom, var(--dots)) 21px 0 / 1px 50% no-repeat, repeating-linear-gradient(to right, var(--dots)) 22px 50% / 22px 1px no-repeat;
}

.toggle {
    color: #9aa7a5;
}

.toggle.open {
    color: #44505a;
}

.toggle svg {
    width: 18px;
    height: 18px;
}

.folder {
    width: 40px;
    height: 32px;
    margin-right: 5px;
}

.book {
    flex: none;
    width: 32px;
    height: 36px;
}

.tree-search {
    margin: auto 12px 7px auto;
}

.tree-search svg {
    width: 18px;
    height: 18px;
}

/* right side */

.content {
    display: flex;
    flex-direction: column;
}

.content-header {
    display: flex;
    align-items: center;
    height: 57px;
    padding-bottom: 5px;
}

.clock {
    margin: 0 8px 0 4px;
}

.clock svg {
    width: 40px;
    height: 40px;
}

.content-header h2 {
    flex: 1;
    padding-right: 6px;
    font-size: 24px;
    line-height: 32px;
    text-align: center;
    color: #333;
}

.content-header .more:last-child {
    width: 28px;
}

.grid-frame {
    display: flex;
    border: 1px solid var(--line);
}

.grid-area {
    flex: 1;
    padding-right: 32px;
}

.grid {
    width: 100%;
    table-layout: fixed;
    border-spacing: 0;
    border-top: 1px solid var(--line);
    border-right: 1px solid var(--line);
}

.w-mark {
    width: 14px;
}

.w-id {
    width: 100px;
}

.w-state {
    width: 127px;
}

.w-wide {
    width: 135px;
}

.w-total {
    width: 91px;
}

.w-diet-state {
    width: 166px;
}

.w-date {
    width: 106px;
}

.w-date-end {
    width: 123px;
}

.w-food {
    width: 219px;
}

.w-note {
    width: 137px;
}

.grid th {
    height: 42px;
    padding: 4px 2px 0;
    border-right: 1px solid var(--line);
    border-bottom: 1px solid var(--line);
    background: #f5f5f5;
    font-weight: normal;
    text-align: left;
    vertical-align: top;
}

.grid th:last-child {
    border-right: 0;
}

.grid tbody td {
    height: 44px;
    padding: 0 3px 1px 2px;
    border-bottom: 1px solid var(--line);
    background: var(--blue);
    white-space: nowrap;
}

.grid tbody tr:nth-child(even) td {
    background: var(--green);
}

.grid .number {
    text-align: right;
}

.grid tbody tr td.mark {
    padding: 0;
    border-right: 1px solid var(--line);
    background: #f5f5f5;
}

.pointer {
    display: block;
    width: 5px;
    margin-left: 4px;
    border: 4px solid transparent;
    border-right: 0;
    border-left: 5px solid #606060;
}

.grid .focused td:not(.mark) {
    border-top: 1px dotted #222;
    border-bottom: 1px dotted #222;
}

.grid .focused td:nth-child(2) {
    border-left: 1px dotted #222;
}

.grid .focused td:last-child {
    border-right: 1px dotted #222;
}

.grid tfoot td {
    height: 45px;
    padding: 2px 2px 2px 3px;
    border-top: 1px solid var(--line);
    background: #f5f5f5;
}

.count {
    display: block;
    padding: 10px 6px;
    border: 1px solid var(--line);
    background: #fff;
    text-align: right;
}

.scrollbar {
    display: flex;
    flex-direction: column;
    align-items: center;
    width: 22px;
    padding: 8px 0;
    border-left: 1px solid var(--line);
}

.arrow-up,
.arrow-down {
    border: 4px solid transparent;
    border-top: 0;
    border-bottom-color: #959595;
}

.arrow-down {
    margin-top: auto;
    border-top: 4px solid #959595;
    border-bottom: 0;
}

.thumb {
    width: 10px;
    height: 143px;
    margin-top: 9px;
    background: #b9b9b9;
}

.splitter {
    height: 10px;
    background: repeating-linear-gradient(to right, #777 0 1px, transparent 1px 2px) center / 19px 1px no-repeat;
}

.detail-tab {
    display: flex;
    align-items: center;
    gap: 10px;
    height: 54px;
    padding: 0 12px 0 16px;
    border: 1px solid var(--line);
    border-top: 2px solid #00a5f5;
    border-bottom: 0;
    font-size: 19px;
    line-height: 24px;
    color: var(--accent);
}

.detail-frame {
    flex: 1;
    padding: 1px 50px 1px 0;
    border: 3px double #c4c4c4;
}

.grid.diet {
    border-left: 1px solid var(--line);
}

.diet tbody td {
    color: #111;
}

.diet td.state {
    padding-left: 36px;
}

.diet .outdated td:not(.mark) {
    background: #b3b3b3;
    color: #868686;
}

.diet-footer {
    height: 38px;
    margin-top: 3px;
    border: 1px solid var(--line);
    background: #f5f5f5;
}

/* bottom */

.document-tabs {
    display: flex;
    align-items: flex-start;
    height: 56px;
    padding-left: 1px;
    border-top: 4px double #b5b5b5;
}

.document-tab {
    display: flex;
    align-items: center;
    height: 49px;
    padding: 0 16px 0 14px;
    border: 1px solid var(--line);
    border-top: 0;
    background: #f5f5f5;
    color: #666;
}

.document-tab.current {
    height: 52px;
    padding-left: 16px;
    border-left: 0;
    border-bottom: 3px solid #00a5f5;
    background: #fff;
    color: var(--accent);
}

.document-name {
    display: flex;
    align-items: center;
    gap: 11px;
}

.document-close {
    margin-left: 13px;
    padding: 2px;
    background: #fff;
    color: var(--accent);
}

.document-close svg {
    width: 16px;
    height: 16px;
}

.status-bar {
    display: flex;
    align-items: center;
    height: 28px;
}

.status-item {
    display: flex;
    align-items: center;
    gap: 21px;
    height: 20px;
    padding: 0 26px 0 12px;
    border-right: 1px solid #b5b5b5;
}

.status-item:first-child {
    padding: 0 30px 0 6px;
}

.status-item.timer {
    padding: 0 36px 0 34px;
}

.status-item svg {
    width: 20px;
    height: 20px;
}

.size-grip {
    height: 20px;
    margin-left: auto;
    padding: 4px 0 0 14px;
    border-left: 1px solid #b5b5b5;
}

.size-grip svg {
    display: block;
    width: 16px;
    height: 16px;
}

.calendar-day {
    font: bold 11px "Noto Sans", sans-serif;
    fill: #2c3a63;
}
```
